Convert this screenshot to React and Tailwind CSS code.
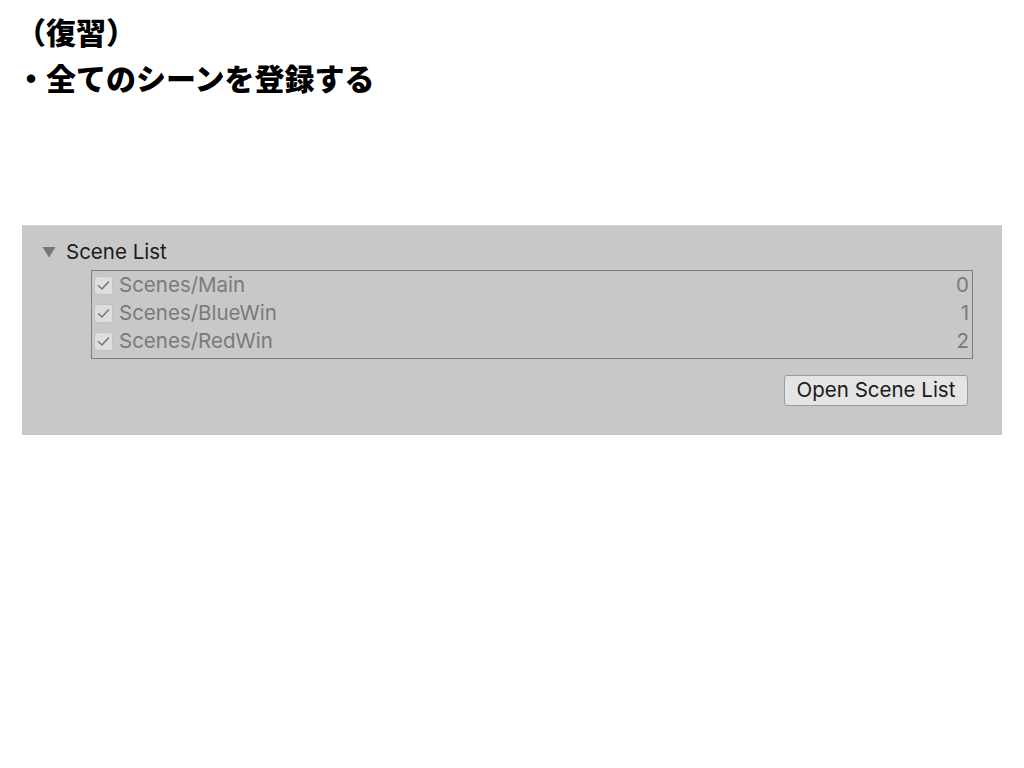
import React from "react";

const scenes = [
  { name: "Scenes/Main", idx: 0 },
  { name: "Scenes/BlueWin", idx: 1 },
  { name: "Scenes/RedWin", idx: 2 },
];

function Check() {
  return (
    <div className="w-[19px] h-[19px] shrink-0 rounded-[3px] bg-[#dedede] border border-[#c2c2c2] flex items-center justify-center">
      <svg width="15" height="15" viewBox="0 0 15 15" fill="none">
        <path d="M2.6 7.8 L5.9 11 L12.4 3.9" stroke="#777777" strokeWidth="1.5" strokeLinecap="round" strokeLinejoin="round" />
      </svg>
    </div>
  );
}

export default function App() {
  return (
    <div className="w-[1024px] h-[768px] bg-white overflow-hidden">
      <div
        className="pt-[8px] pl-4 text-[30px] leading-[46px] font-black text-black"
        style={{ fontFamily: '"Noto Sans CJK JP", "Noto Sans", sans-serif' }}
      >
        <div>（復習）</div>
        <div>・全てのシーンを登録する</div>
      </div>
      <div
        className="mt-[125px] mx-[22px] h-[210px] bg-[#c8c8c8] border-t border-[#d4d4d4] pt-[12px] flex flex-col"
        style={{ fontFamily: 'Inter, "Liberation Sans", sans-serif' }}
      >
        <div className="h-[28px] flex items-center pl-[20px]">
          <svg width="14" height="12" viewBox="0 0 14 12" className="mr-[10px]">
            <path d="M0.5 1 L13.5 1 L7 11.5 Z" fill="#777777" />
          </svg>
          <span className="text-[20.5px] text-[#1c1c1c]">Scene List</span>
        </div>
        <div className="mt-[4px] ml-[69px] mr-[29px] border border-[#7e7e7e] pb-[3px]">
          {scenes.map((s) => (
            <div key={s.idx} className="h-[28px] flex items-center pl-[2px] pr-[3px]">
              <Check />
              <span className="ml-[6px] text-[20.5px] text-[#7a7a7a] flex-1">{s.name}</span>
              <span className="text-[20.5px] text-[#7a7a7a]">{s.idx}</span>
            </div>
          ))}
        </div>
        <div className="mt-[16px] flex justify-end mr-[34px]">
          <button className="h-[31px] w-[184px] rounded-[3px] bg-[#e4e4e4] border border-[#9c9c9c] text-[20.5px] text-[#1a1a1a] flex items-center justify-center">
            Open Scene List
          </button>
        </div>
      </div>
    </div>
  );
}
